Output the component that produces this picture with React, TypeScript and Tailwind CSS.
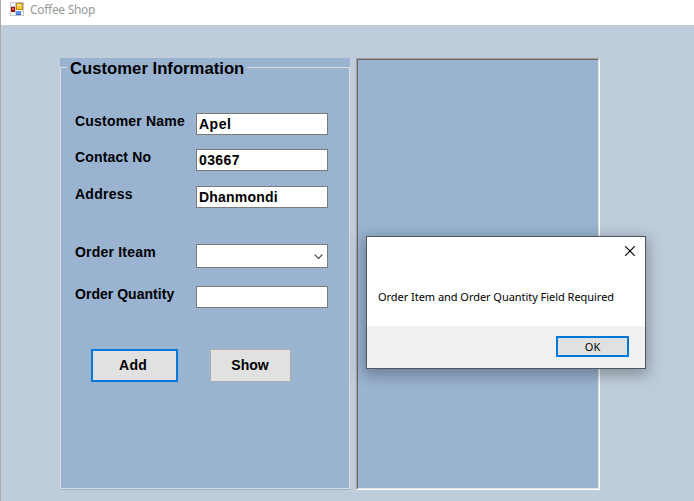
import type { ReactNode } from "react";

const labelFont = "font-['Liberation_Sans',Arial,sans-serif] font-bold";

function AppIcon() {
  return (
    <svg width="14" height="14" viewBox="0 0 14 14" shapeRendering="crispEdges">
      <rect x="0.5" y="0.5" width="13" height="13" fill="#fff" stroke="#c4c8cc" />
      <path d="M5.5 0V14M0 4.5H6M0 9.5H14" stroke="#c9ccd0" fill="none" />
      <rect x="6" y="1" width="7" height="7" fill="#c98c06" />
      <rect x="7" y="2" width="5" height="5" fill="#f8cb3c" />
      <rect x="7" y="2" width="4" height="2" fill="#ffe68a" />
      <rect x="1" y="5" width="4" height="5" fill="#981708" />
      <rect x="2" y="6" width="2" height="2" fill="#e8604c" />
      <rect x="6" y="9" width="5" height="4" fill="#5b97e6" />
      <rect x="6" y="12" width="5" height="1" fill="#2c62bd" />
    </svg>
  );
}

function Row({ label, tracking, className = "", children }: { label: string; tracking: string; className?: string; children: ReactNode }) {
  return (
    <div className={`flex items-start ${className}`}>
      <div className="w-[121px] shrink-0">
        <label className={`block text-[14px] leading-5 whitespace-nowrap ${tracking}`}>{label}</label>
      </div>
      <div className="mt-[2px] w-[132px]">{children}</div>
    </div>
  );
}

function Field({ value = "", className = "" }: { value?: string; className?: string }) {
  return (
    <input
      readOnly
      value={value}
      className={`block h-[22px] w-full border border-[#7a7a7a] bg-white pl-[2px] text-[14px] leading-4 text-black outline-none ${className}`}
    />
  );
}

function CustomerForm() {
  return (
    <section className={`h-[432px] w-[290px] bg-[#99b3d1] pt-[9px] text-black ${labelFont}`}>
      <div className="h-[422px] w-[290px] border border-[#dcdcdc] pl-[14px]">
        <h1 className="-ml-[8px] -mt-[9px] h-5 w-[180px] bg-[#99b3d1] pl-[3px] text-[16.7px] leading-5 whitespace-nowrap">
          Customer Information
        </h1>
        <Row label="Customer Name" tracking="tracking-[0.2px]" className="mt-[32px] h-[36px]">
          <Field value="Apel" className="tracking-[0.5px]" />
        </Row>
        <Row label="Contact No" tracking="tracking-[0.15px]" className="h-[37px]">
          <Field value="03667" className="tracking-[0.4px]" />
        </Row>
        <Row label="Address" tracking="tracking-[0.25px]" className="h-[58px]">
          <Field value="Dhanmondi" className="tracking-[0.2px]" />
        </Row>
        <Row label="Order Iteam" tracking="tracking-[0.2px]" className="h-[42px]">
          <div className="flex h-[24px] w-full items-center justify-end border border-[#7a7a7a] bg-white pt-[1px] pr-[4px]">
            <svg width="9" height="6" viewBox="0 0 9 6" fill="none">
              <path d="M0.7 0.7L4.5 4.5L8.3 0.7" stroke="#444" strokeWidth="1.2" />
            </svg>
          </div>
        </Row>
        <Row label="Order Quantity" tracking="tracking-[0.03px]">
          <Field />
        </Row>
        <div className="mt-[41px] ml-[16px] flex gap-8 text-[14px]">
          <button className="h-[33px] w-[87px] border-2 border-[#0078d7] bg-[#e1e1e1] pr-[3px] tracking-[0.2px]">Add</button>
          <button className="h-[33px] w-[81px] border border-[#adadad] bg-[#e1e1e1] pr-[1px]">Show</button>
        </div>
      </div>
    </section>
  );
}

function MessageBox() {
  return (
    <div
      role="dialog"
      className="absolute top-[236px] left-[365px] flex h-[133px] w-[280px] flex-col border border-[#4c5866] bg-white font-['Noto_Sans','Open_Sans',sans-serif] text-[11px] text-black shadow-[0_4px_14px_2px_rgba(0,0,0,0.3)]"
    >
      <div className="flex h-[50px] justify-end pt-[9px] pr-[10px]">
        <svg width="10" height="10" viewBox="0 0 10 10" fill="none">
          <path d="M0.2 0.2L9.8 9.8M9.8 0.2L0.2 9.8" stroke="#000" strokeWidth="1.1" />
        </svg>
      </div>
      <p className="h-[39px] pl-[11px] leading-5 tracking-[-0.04px] whitespace-nowrap">Order Item and Order Quantity Field Required</p>
      <div className="flex flex-1 justify-end bg-[#f0f0f0] pt-[10px] pr-[16px]">
        <button className="h-[21px] w-[73px] border-2 border-[#0078d7] bg-[#e1e1e1] leading-4">OK</button>
      </div>
    </div>
  );
}

export default function App() {
  return (
    <div className="relative flex h-[501px] w-[694px] flex-col overflow-hidden border-l border-[#a8a8a8] bg-[#bfcddb]">
      <header className="flex h-[25px] shrink-0 items-start gap-[6px] bg-white pt-[2px] pl-[9px]">
        <AppIcon />
        <span className="font-['Noto_Sans','Open_Sans',sans-serif] text-[12px] leading-4 tracking-[-0.3px] text-[#999]">Coffee Shop</span>
      </header>
      <main className="flex gap-[6px] pt-[33px] pl-[59px]">
        <CustomerForm />
        <div className="h-[432px] w-[244px] border border-t-[#a0a0a0] border-r-white border-b-white border-l-[#a0a0a0]">
          <div className="h-full border border-t-[#696969] border-r-[#e3e3e3] border-b-[#e3e3e3] border-l-[#696969] bg-[#99b3d1]" />
        </div>
      </main>
      <MessageBox />
    </div>
  );
}
